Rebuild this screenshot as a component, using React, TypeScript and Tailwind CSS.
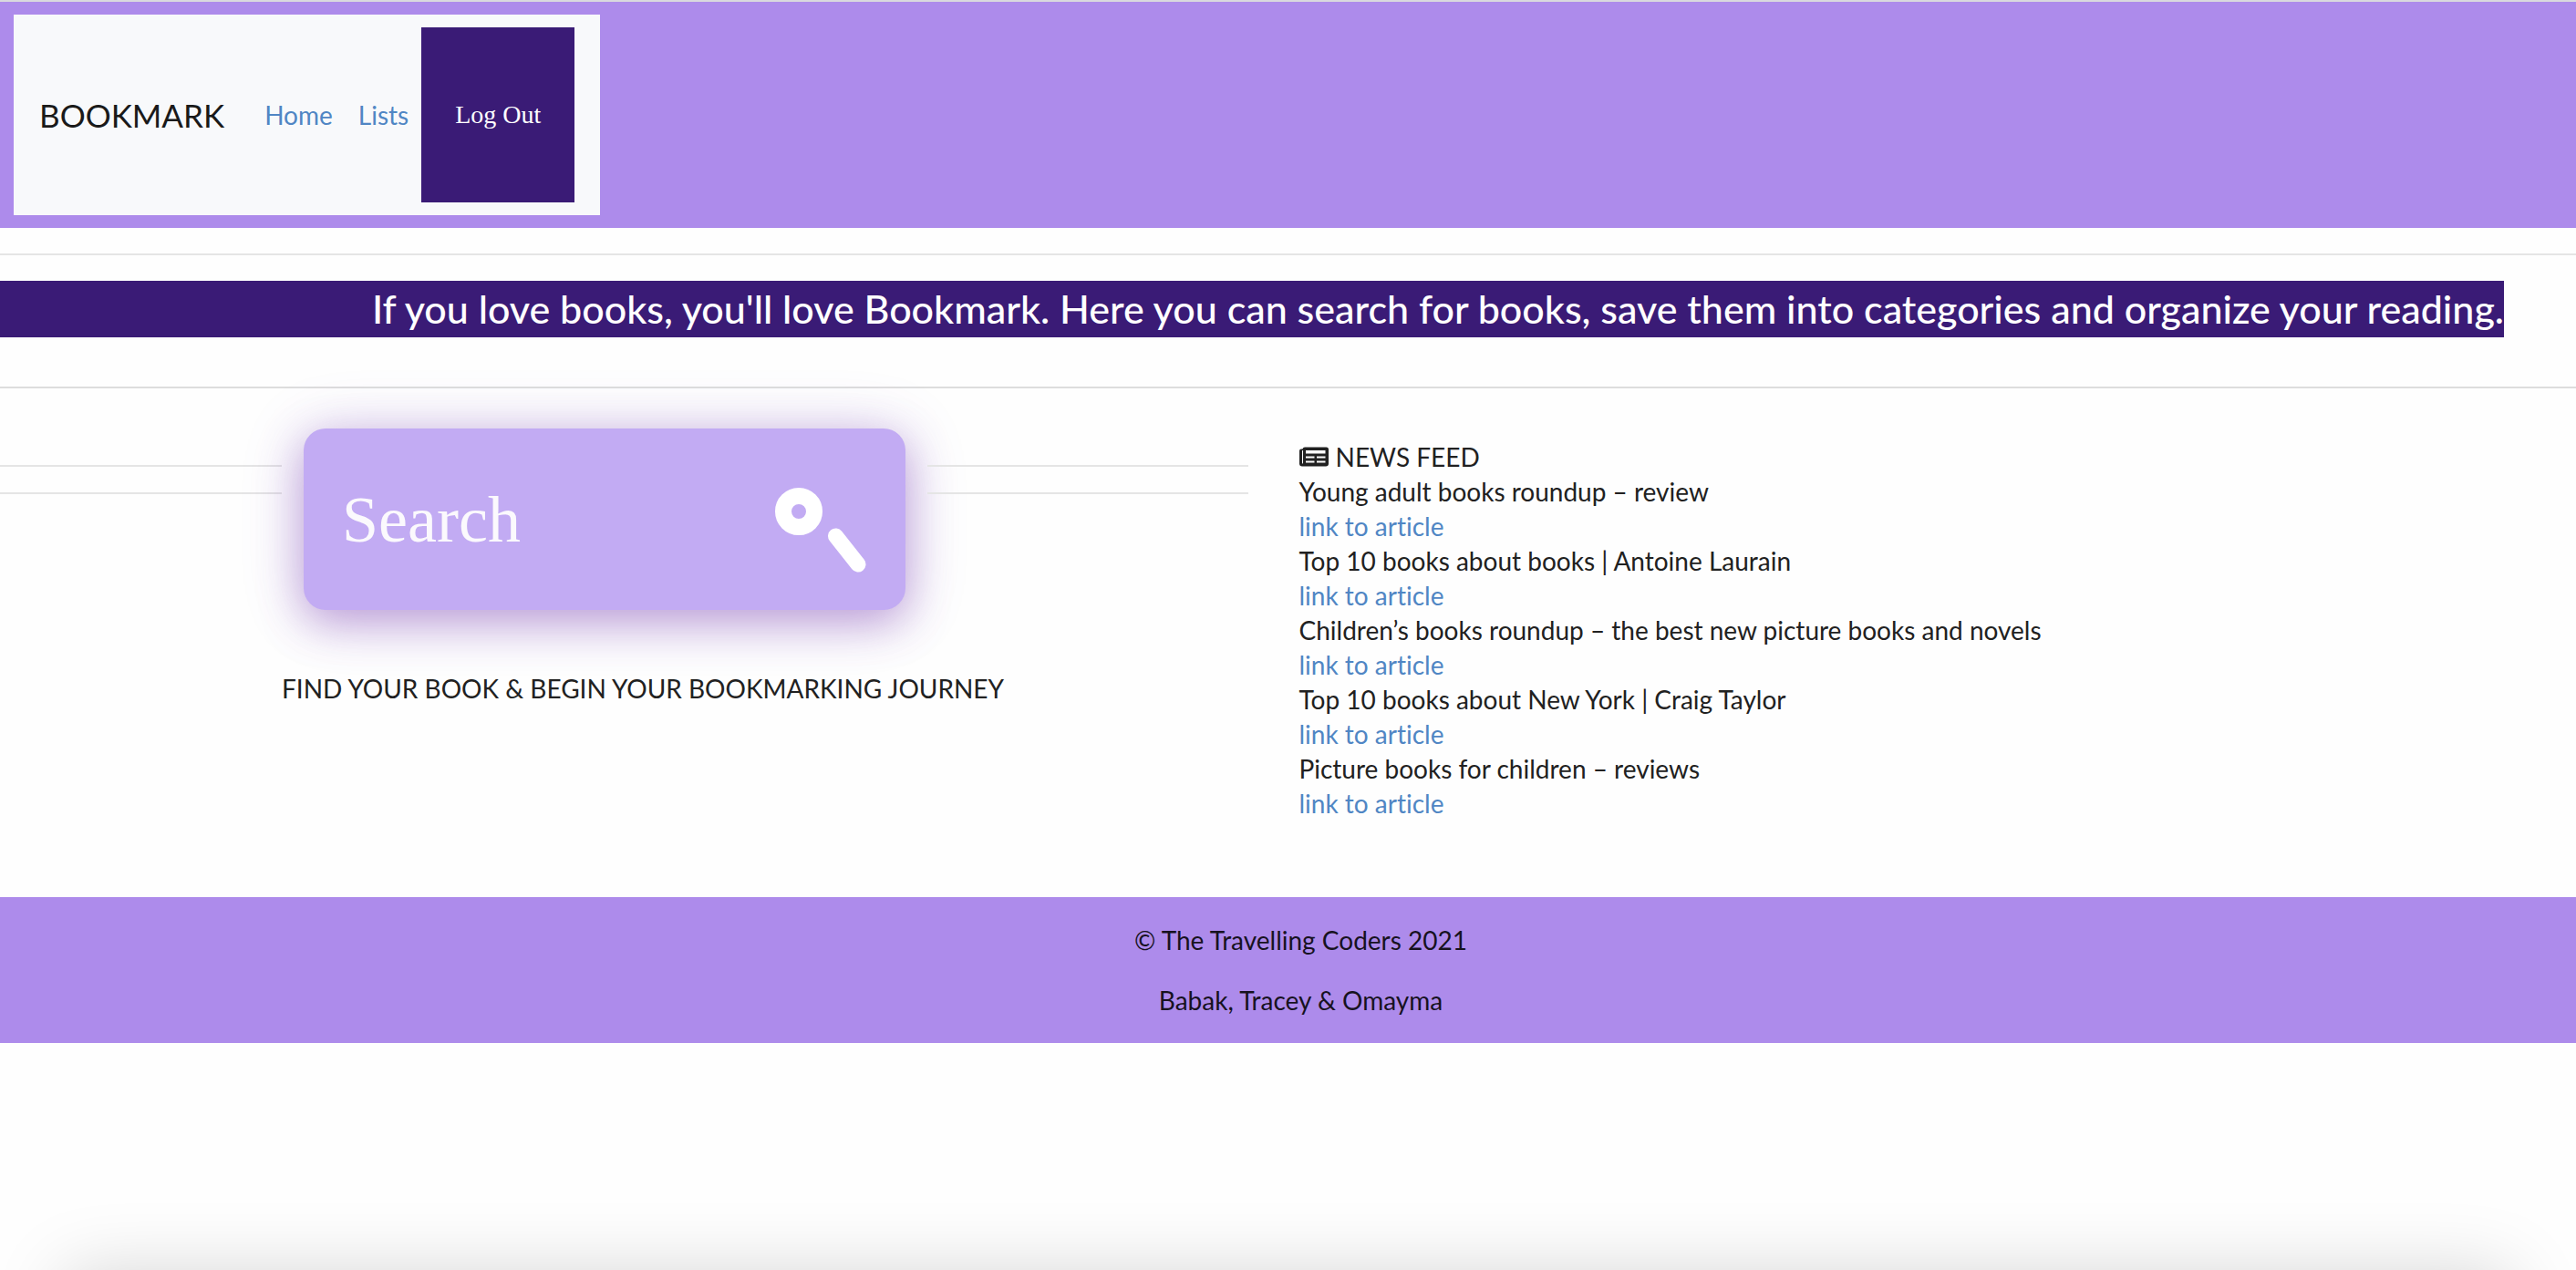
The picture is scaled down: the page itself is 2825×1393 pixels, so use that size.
import React from "react";

const articles = [
  "Young adult books roundup – review",
  "Top 10 books about books | Antoine Laurain",
  "Children’s books roundup – the best new picture books and novels",
  "Top 10 books about New York | Craig Taylor",
  "Picture books for children – reviews",
];

function Header() {
  return (
    <header className="flex border-t-2 border-[#d9d9de] bg-[#ad8beb] pt-3.5 pb-3.5 pl-[15px]">
      <nav className="flex items-center bg-[#f8f9fb] py-3.5 pr-7 pl-7">
        <a href="#" className="mr-[30px] text-[35px] leading-[54px] text-[#1a1a1a]">
          BOOKMARK
        </a>
        <a href="#home" className="px-3.5 text-[28px] leading-[42px] text-[#5086c4]">
          Home
        </a>
        <a href="#lists" className="px-3.5 text-[28px] leading-[42px] text-[#5086c4]">
          Lists
        </a>
        <button
          type="button"
          className="h-48 w-[168px] bg-[#3a1b76] font-['Liberation_Serif',serif] text-[28px] text-white"
        >
          Log Out
        </button>
      </nav>
    </header>
  );
}

function NewspaperIcon() {
  return (
    <svg width="32" height="22" viewBox="0 0 32 22" aria-hidden="true">
      <path
        fill="currentColor"
        d="M6 0.500H29.500Q32 0.500 32 3V18.500Q32 21.500 29 21.500H3Q0 21.500 0 18.500V4.500Q0 2.500 2 2.500H3.500Q3.800 0.500 6 0.500Z"
      />
      <path fill="none" stroke="#fefefe" strokeWidth="1" strokeLinecap="round" d="M3.500 4.500V18" />
      <path fill="#fefefe" d="M7 4H28.500V7.500H7ZM7 10.500H16.500V12.500H7ZM19 10.500H28.500V12.500H19ZM7 15.500H16.500V17.500H7ZM19 15.500H28.500V17.500H19Z" />
    </svg>
  );
}

function SearchIcon() {
  return (
    <svg width="102" height="96" viewBox="0 0 102 96" fill="none" stroke="#fff" aria-hidden="true">
      <circle cx="26" cy="29" r="17" strokeWidth="18" />
      <path d="M66.500 56L91 87" strokeWidth="17" strokeLinecap="round" />
    </svg>
  );
}

function SearchBox() {
  return (
    <form
      role="search"
      onSubmit={(e) => e.preventDefault()}
      className="mx-6 flex h-[199px] w-[660px] shrink-0 items-center justify-between rounded-[24px] bg-[#c2abf3] pr-[41px] pl-[42px] shadow-[0_14px_48px_rgba(130,70,180,0.45),0_4px_70px_rgba(110,70,190,0.2)]"
    >
      <input
        type="text"
        aria-label="Search"
        placeholder="Search"
        className="h-24 w-[400px] bg-transparent font-['Liberation_Serif',serif] text-[72px] text-white outline-none placeholder:text-[#fbf9fd] placeholder:opacity-100"
      />
      <button type="submit" aria-label="Submit search" className="mt-5">
        <SearchIcon />
      </button>
    </form>
  );
}

function Rules({ className }: { className: string }) {
  return (
    <div className={className}>
      <hr className="mt-10 border-t-2 border-[#e5e5e5]" />
      <hr className="mt-7 border-t-2 border-[#e5e5e5]" />
    </div>
  );
}

function NewsFeed() {
  return (
    <section className="pt-14 pl-3 text-[28px] leading-[38px]">
      <h2 className="flex items-center gap-2">
        <NewspaperIcon />
        NEWS FEED
      </h2>
      <ul>
        {articles.map((title) => (
          <li key={title}>
            <p>{title}</p>
            <a href="#article" className="block w-fit text-[#5086c4]">
              link to article
            </a>
          </li>
        ))}
      </ul>
    </section>
  );
}

export default function App() {
  return (
    <div className="min-h-screen bg-[#fefefe] font-['Lato',sans-serif] text-[#212121] [font-variant-ligatures:none]">
      <Header />
      <main>
        <hr className="my-7 border-t-2 border-[#e5e5e5]" />
        <p className="mr-[79px] bg-[#3a1b76] text-right text-[43px] leading-[62px] font-medium text-white">
          If you love books, you'll love Bookmark. Here you can search for books, save them into
          categories and organize your reading.
        </p>
        <hr className="mt-[54px] border-t-2 border-[#dddddd]" />
        <div className="grid grid-cols-2 pb-[84px]">
          <div className="pr-11">
            <div className="flex pt-11">
              <Rules className="w-[309px] shrink-0" />
              <SearchBox />
              <Rules className="grow" />
            </div>
            <p className="mt-[67px] pl-[309px] text-[28px] leading-[38px]">
              FIND YOUR BOOK &amp; BEGIN YOUR BOOKMARKING JOURNEY
            </p>
          </div>
          <NewsFeed />
        </div>
      </main>
      <footer className="flex flex-col gap-7 bg-[#ad8beb] py-7 pl-7 text-center text-[28px] leading-[38px] text-[#17121f]">
        <p>© The Travelling Coders 2021</p>
        <p>Babak, Tracey &amp; Omayma</p>
      </footer>
      <div className="pointer-events-none fixed inset-x-[72px] top-full h-40 shadow-[0_4px_80px_rgba(0,0,0,0.17)]" />
    </div>
  );
}
